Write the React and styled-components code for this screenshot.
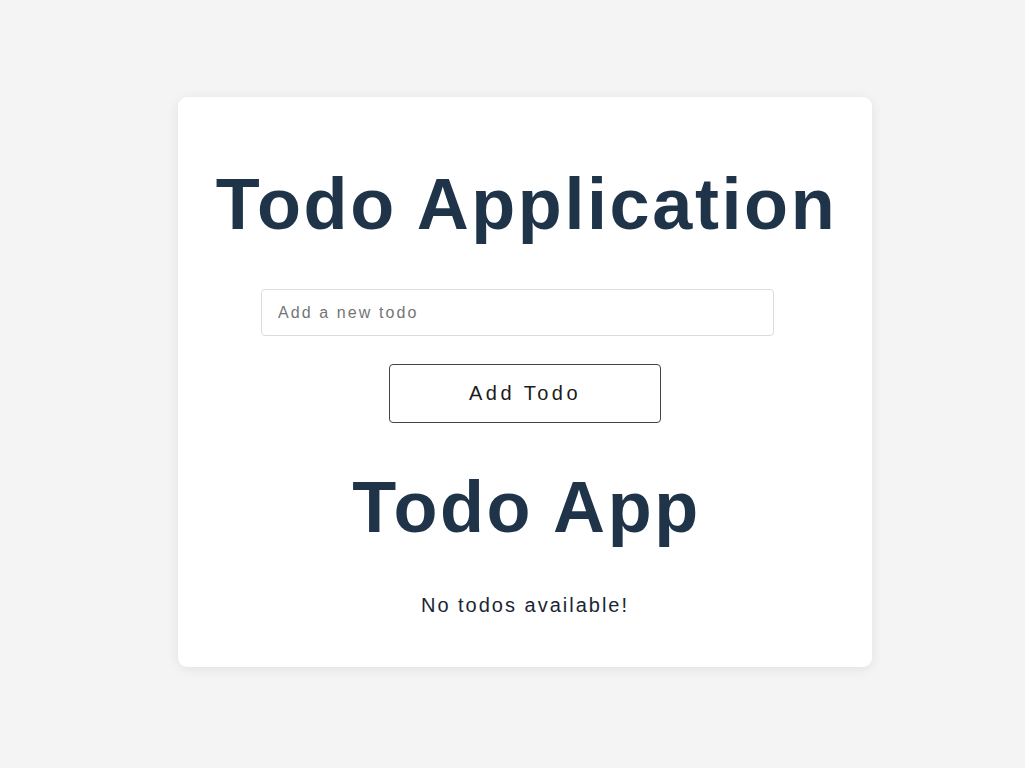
import React from "react";
import styled, { createGlobalStyle } from "styled-components";

const Global = createGlobalStyle`
  html, body { margin: 0; padding: 0; background: #f4f4f4; }
  body { font-family: "Liberation Sans", Arial, sans-serif; }
`;

const Page = styled.div`
  min-height: 768px;
  display: flex;
  justify-content: center;
  align-items: flex-start;
  padding-top: 97px;
  padding-left: 25px;
  box-sizing: border-box;
`;

const Card = styled.div`
  width: 694px;
  height: 570px;
  box-sizing: border-box;
  background: #fff;
  border-radius: 9px;
  box-shadow: 0 2px 12px rgba(0, 0, 0, 0.08);
  display: flex;
  flex-direction: column;
  align-items: center;
  padding-top: 67px;
`;

const Title = styled.h1`
  margin: 0;
  font-size: 72px;
  font-weight: 700;
  line-height: 80px;
  letter-spacing: 2.6px;
  color: #1f3349;
  white-space: nowrap;
  margin-left: 3px;
`;

const Form = styled.form`
  display: flex;
  flex-direction: column;
  align-items: center;
  align-self: stretch;
  margin-top: ${(p) => p.$top}px;
`;

const Input = styled.input`
  width: 513px;
  height: 47px;
  box-sizing: border-box;
  border: 1px solid #dcdcdc;
  border-radius: 4px;
  padding: 0 16px;
  font-family: "Liberation Sans", Arial, sans-serif;
  font-size: 16px;
  letter-spacing: 2.1px;
  color: #333;
  margin-right: 15px;
  outline: none;
  &::placeholder { color: #757575; }
`;

const Button = styled.button`
  margin-top: 28px;
  width: 272px;
  height: 59px;
  box-sizing: border-box;
  background: #fff;
  border: 1px solid #444;
  border-radius: 4px;
  font-family: "Liberation Sans", Arial, sans-serif;
  font-size: 20px;
  letter-spacing: 3.5px;
  color: #1c1c1c;
  cursor: pointer;
`;

const SubTitle = styled(Title).attrs({ as: "h2" })`
  margin-top: 44px;
`;

const Empty = styled.p`
  margin: 47px 0 0;
  font-size: 20px;
  letter-spacing: 2px;
  color: #1a2533;
`;

export default function App() {
  return (
    <>
      <Global />
      <Page>
        <Card>
          <Title>Todo Application</Title>
          <Form $top={45} onSubmit={(e) => e.preventDefault()}>
            <Input placeholder="Add a new todo" />
            <Button type="submit">Add Todo</Button>
          </Form>
          <SubTitle>Todo App</SubTitle>
          <Empty>No todos available!</Empty>
        </Card>
      </Page>
    </>
  );
}
